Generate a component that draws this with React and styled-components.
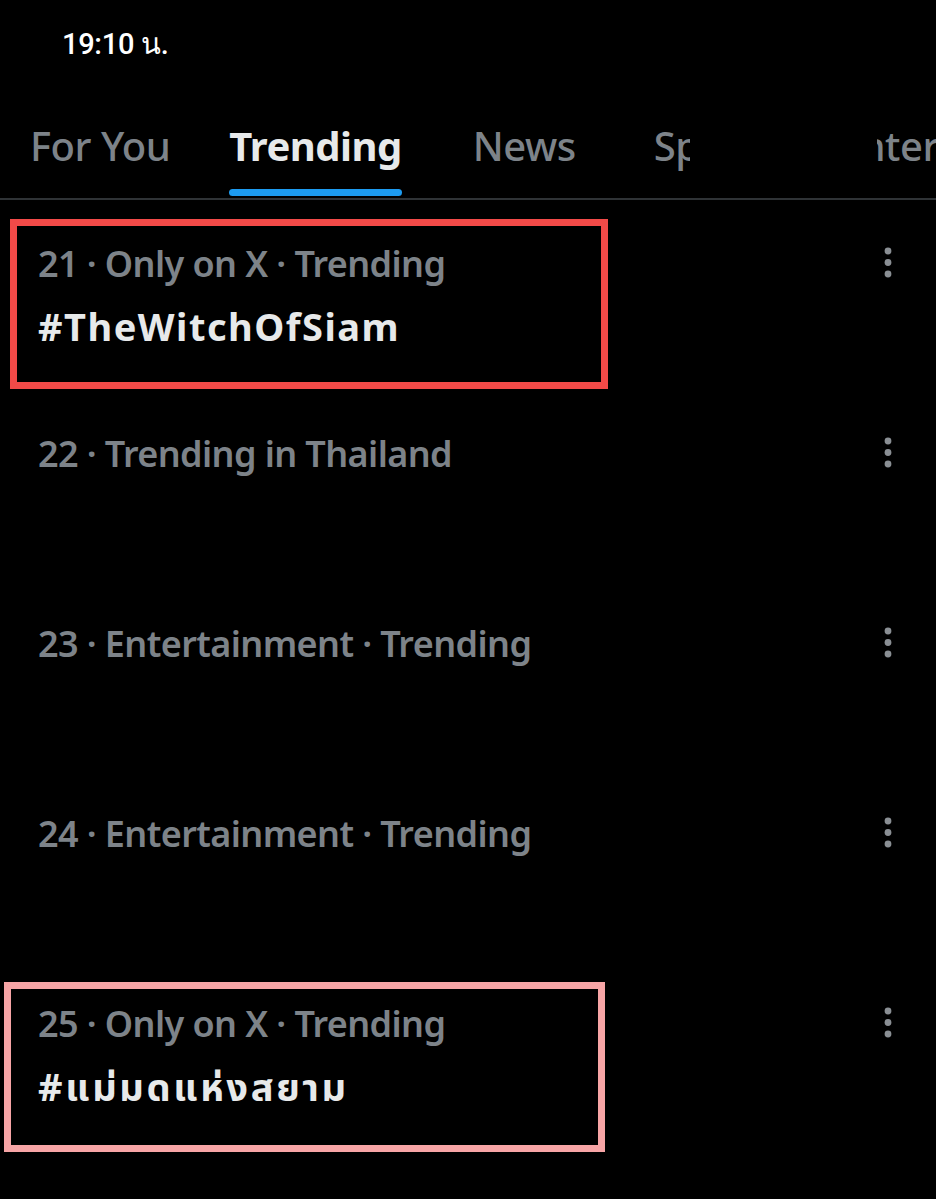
import styled, { createGlobalStyle } from 'styled-components';

const GlobalStyle = createGlobalStyle`
  html, body {
    margin: 0;
    padding: 0;
    background: #000;
  }
  body {
    font-family: "Noto Sans", "Noto Sans Thai", "DejaVu Sans", sans-serif;
    color: #e7e9ea;
    -webkit-font-smoothing: antialiased;
  }
`;

const Screen = styled.div`
  width: 936px;
  min-height: 1199px;
  background: #000;
  overflow: hidden;
`;

const StatusBar = styled.div`
  height: 88px;
  display: flex;
  align-items: center;
  padding-left: 62px;
  font-family: Roboto, "Noto Sans", sans-serif;
  font-size: 29px;
  font-weight: 500;
  color: #fff;
  letter-spacing: -0.3px;
`;

const TabBar = styled.div`
  position: relative;
  height: 112px;
  display: flex;
  align-items: stretch;
  padding-left: 30px;
  border-bottom: 2px solid #2f3336;
  box-sizing: border-box;
  white-space: nowrap;
  overflow: hidden;
`;

const Tab = styled.div`
  position: relative;
  flex-shrink: 0;
  display: flex;
  align-items: center;
  padding-top: 4px;
  margin-right: ${p => p.gap || 0}px;
  font-size: 40px;
  font-weight: ${p => (p.active ? 700 : 500)};
  color: ${p => (p.active ? '#e7e9ea' : '#7d8389')};
  letter-spacing: -0.5px;
  ${p => p.clip && `width: ${p.clip}px; overflow: hidden;`}
`;

const Underline = styled.span`
  position: absolute;
  left: 0;
  right: 0;
  bottom: 2px;
  height: 7px;
  border-radius: 4px;
  background: #1d9bf0;
`;

const Mask = styled.div`
  position: absolute;
  top: 0;
  bottom: 0;
  left: 690px;
  width: 187px;
  background: #000;
`;

const List = styled.div`
  display: flex;
  flex-direction: column;
`;

const Row = styled.div`
  position: relative;
  height: 190px;
  box-sizing: border-box;
  padding: 44px 36px 0 38px;
  display: flex;
  justify-content: space-between;
  align-items: flex-start;
`;

const Texts = styled.div`
  display: flex;
  flex-direction: column;
`;

const Meta = styled.div`
  font-size: 36px;
  line-height: 40px;
  font-weight: 600;
  color: #7d8389;
  letter-spacing: -0.6px;
`;

const Title = styled.div`
  margin-top: 18px;
  font-size: 38px;
  line-height: 48px;
  font-weight: 700;
  color: #e7e9ea;
  letter-spacing: ${p => p.spacing}px;
`;

const More = styled.div`
  width: 24px;
  display: flex;
  justify-content: center;
  padding-top: 2px;
`;

const Highlight = styled.div`
  position: absolute;
  top: ${p => p.top}px;
  left: ${p => p.left}px;
  width: ${p => p.w}px;
  height: ${p => p.h}px;
  border: 7px solid ${p => p.color};
  box-sizing: border-box;
  pointer-events: none;
`;

function Dots() {
  return (
    <svg width="10" height="34" viewBox="0 0 10 34">
      <circle cx="5" cy="5" r="3.4" fill="#8a8f94" />
      <circle cx="5" cy="16.5" r="3.4" fill="#8a8f94" />
      <circle cx="5" cy="28" r="3.4" fill="#8a8f94" />
    </svg>
  );
}

const trends = [
  { meta: '21 · Only on X · Trending', title: '#TheWitchOfSiam', spacing: 1.5, box: { top: 19, left: 10, w: 598, h: 170, color: '#f24a48' } },
  { meta: '22 · Trending in Thailand' },
  { meta: '23 · Entertainment · Trending' },
  { meta: '24 · Entertainment · Trending' },
  { meta: '25 · Only on X · Trending', title: '#แม่มดแห่งสยาม', spacing: 2.6, box: { top: 22, left: 4, w: 601, h: 170, color: '#f7a5a6' } },
];

export default function App() {
  return (
    <Screen>
      <GlobalStyle />
      <StatusBar>19:10 น.</StatusBar>
      <TabBar>
        <Tab gap={59}>For You</Tab>
        <Tab active gap={71}>
          Trending
          <Underline />
        </Tab>
        <Tab gap={78}>News</Tab>
        <Tab clip={40} gap={145}>Sports</Tab>
        <Tab>Entertainment</Tab>
        <Mask />
      </TabBar>
      <List>
        {trends.map(t => (
          <Row key={t.meta}>
            <Texts>
              <Meta>{t.meta}</Meta>
              {t.title && <Title spacing={t.spacing}>{t.title}</Title>}
            </Texts>
            <More><Dots /></More>
            {t.box && <Highlight {...t.box} />}
          </Row>
        ))}
      </List>
    </Screen>
  );
}
